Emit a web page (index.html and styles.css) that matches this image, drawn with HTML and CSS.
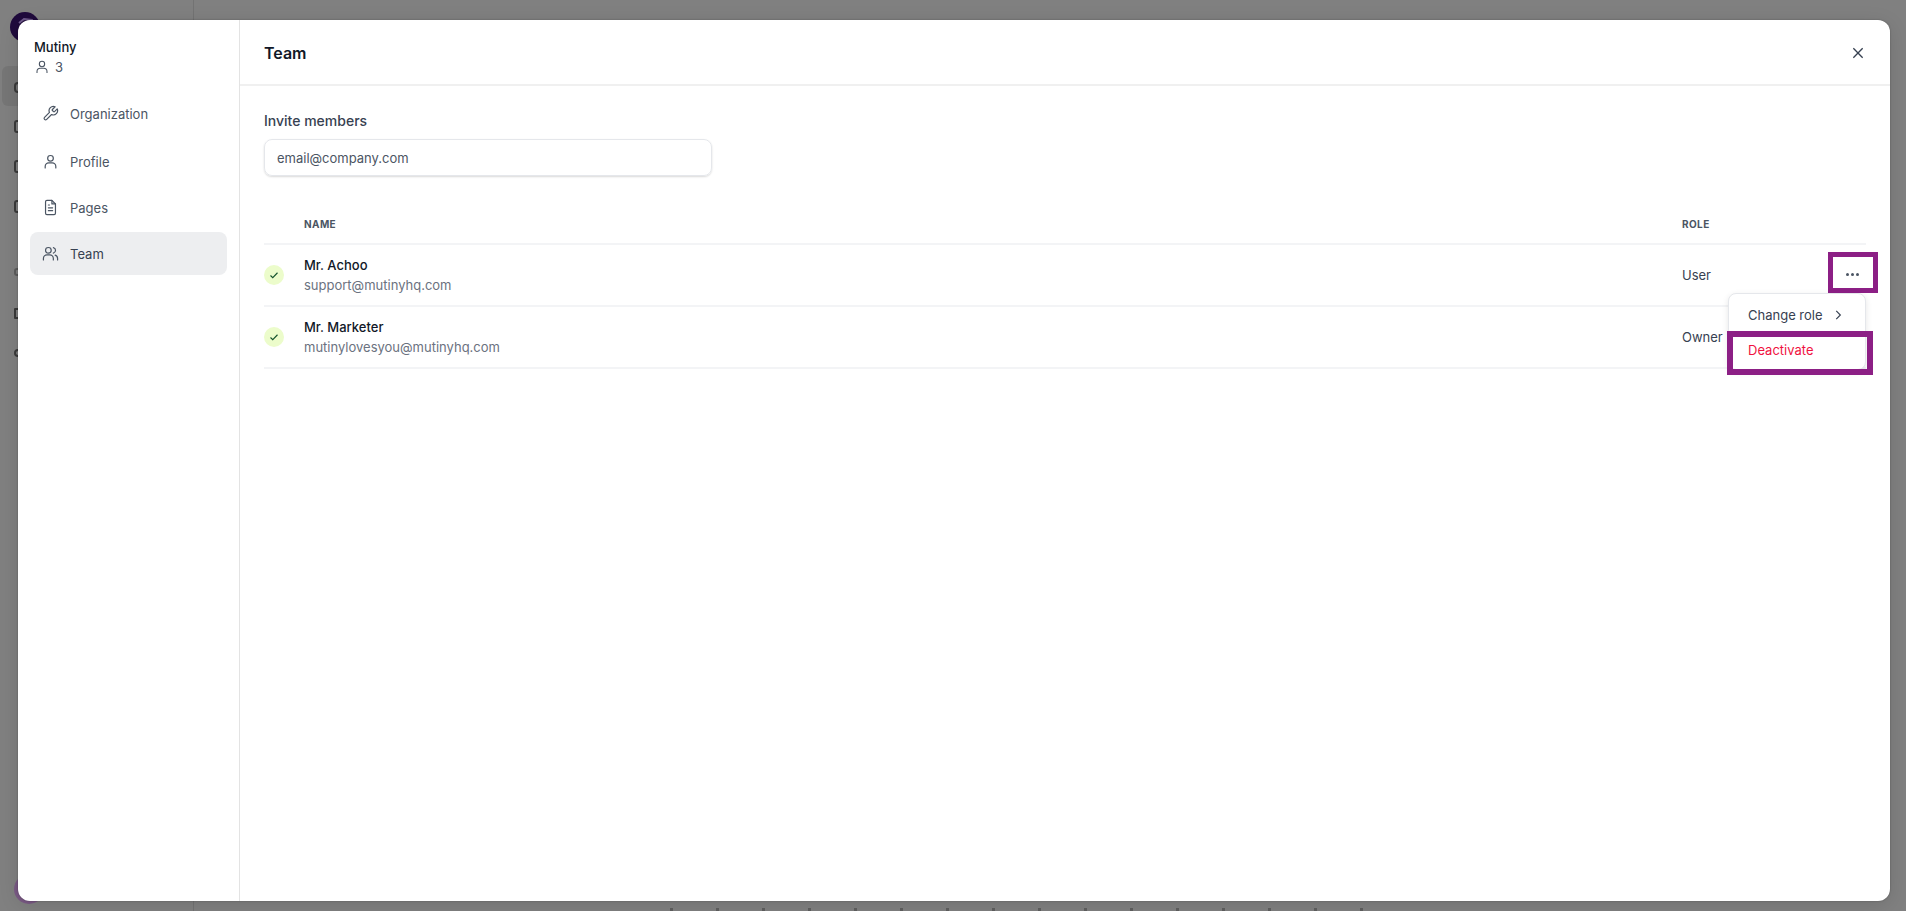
FILE: index.html
```html
<!DOCTYPE html>
<html lang="en">
<head>
    <meta charset="UTF-8">
    <title>Team</title>
    <link rel="stylesheet" href="styles.css">
</head>
<body>
    <!-- app behind the overlay -->
    <div class="behind">
        <div class="behind-nav">
            <div class="logo">
                <svg viewBox="0 0 30 30"><path d="M9 11l5-4 8 1 3 6-3 7-7 3"/></svg>
            </div>
            <div class="behind-active"></div>
            <div class="behind-icons">
                <span class="stub s1"></span>
                <span class="stub s2"></span>
                <span class="stub s3"></span>
                <span class="stub s3"></span>
                <span class="stub s4"></span>
                <span class="stub s5"></span>
                <span class="stub s6"></span>
            </div>
            <div class="avatar"></div>
        </div>
        <div class="behind-text"></div>
    </div>

    <div class="modal">
        <aside class="side">
            <div class="org">
                <div class="org-name">Mutiny</div>
                <div class="org-count">
                    <svg class="ico-sm" viewBox="0 0 24 24"><circle cx="12" cy="7.5" r="4"/><path d="M4.5 21v-2a5 5 0 0 1 5-5h5a5 5 0 0 1 5 5v2"/></svg>
                    <span>3</span>
                </div>
            </div>
            <nav class="nav">
                <a class="nav-item first">
                    <svg class="ico" viewBox="0 0 24 24"><path d="M14.7 6.3a1 1 0 0 0 0 1.4l1.6 1.6a1 1 0 0 0 1.4 0l3.77-3.77a6 6 0 0 1-7.94 7.94l-6.91 6.91a2.12 2.12 0 0 1-3-3l6.91-6.91a6 6 0 0 1 7.94-7.94l-3.76 3.76z"/></svg>
                    Organization
                </a>
                <a class="nav-item">
                    <svg class="ico" viewBox="0 0 24 24"><circle cx="12" cy="7.5" r="4"/><path d="M4.5 21v-2a5 5 0 0 1 5-5h5a5 5 0 0 1 5 5v2"/></svg>
                    Profile
                </a>
                <a class="nav-item">
                    <svg class="ico" viewBox="0 0 24 24"><path d="M14 2H7a2 2 0 0 0-2 2v16a2 2 0 0 0 2 2h10a2 2 0 0 0 2-2V7z"/><path d="M14 2v5h5M9 12.5h6M9 16.5h6M9 8.5h1.5"/></svg>
                    Pages
                </a>
                <a class="nav-item active">
                    <svg class="ico" viewBox="0 0 24 24"><circle cx="9" cy="7.5" r="4"/><path d="M2 21v-2a5 5 0 0 1 5-5h4a5 5 0 0 1 5 5v2M16 3.6a4 4 0 0 1 0 7.8M22 21v-2a5 5 0 0 0-3.5-4.8"/></svg>
                    Team
                </a>
            </nav>
        </aside>

        <main class="main">
            <header class="head">
                <h1>Team</h1>
                <svg class="close" viewBox="0 0 24 24"><path d="M5 5l14 14M19 5L5 19"/></svg>
            </header>
            <div class="content">
                <label class="invite-label">Invite members</label>
                <div class="invite-input">email@company.com</div>

                <div class="table">
                    <div class="row row-head">
                        <div class="c-status"></div>
                        <div class="c-name">NAME</div>
                        <div class="c-role">ROLE</div>
                    </div>
                    <div class="row">
                        <div class="c-status"><span class="tick"><svg viewBox="0 0 24 24"><path d="M5 13l4.5 4.5L19 7.5"/></svg></span></div>
                        <div class="c-name">
                            <div class="person">Mr. Achoo</div>
                            <div class="mail">support@mutinyhq.com</div>
                        </div>
                        <div class="c-role">User</div>
                    </div>
                    <div class="row">
                        <div class="c-status"><span class="tick"><svg viewBox="0 0 24 24"><path d="M5 13l4.5 4.5L19 7.5"/></svg></span></div>
                        <div class="c-name">
                            <div class="person">Mr. Marketer</div>
                            <div class="mail">mutinylovesyou@mutinyhq.com</div>
                        </div>
                        <div class="c-role">Owner</div>
                    </div>
                </div>

                <!-- dropdown open on first row -->
                <div class="dots"><i></i><i></i><i></i></div>
                <div class="menu">
                    <div class="menu-item">Change role
                        <svg class="chev" viewBox="0 0 24 24"><path d="M9 5l7 7-7 7"/></svg>
                    </div>
                    <div class="menu-item danger">Deactivate</div>
                </div>
            </div>
        </main>
    </div>
</body>
</html>
```

FILE: styles.css
```css
html, body{
    margin: 0;
    height: 100%;
}
body{
    width: 1906px;
    height: 911px;
    overflow: hidden;
    position: relative;
    background-color: #808080;
    font-family: "Inter", "Liberation Sans", sans-serif;
    color: #111827;
}
.behind{
    height: 100%;
}
.behind-nav{
    width: 193px;
    height: 100%;
    border-right: 1px solid #737373;
    position: relative;
}
.logo{
    position: absolute;
    left: 10px;
    top: 12px;
    width: 30px;
    height: 30px;
    border-radius: 50%;
    background-color: #1f0a3c;
}
.logo svg{
    display: block;
    fill: none;
    stroke: #6f5a8c;
    stroke-width: 2;
}
.avatar{
    position: absolute;
    left: 14px;
    top: 874px;
    width: 30px;
    height: 30px;
    border-radius: 50%;
    background-color: #7a5a85;
}
.behind-active{
    position: absolute;
    left: 2px;
    top: 66px;
    width: 30px;
    height: 40px;
    border-radius: 6px;
    background-color: #767676;
}
.behind-icons{
    position: absolute;
    left: 14px;
    top: 0;
    display: flex;
    flex-direction: column;
}
.stub{
    display: block;
    width: 8px;
    box-sizing: border-box;
    border: 2px solid #3a3a3a;
    border-radius: 3px;
}
.s1{
    height: 11px;
    margin-top: 82px;
    border-radius: 5px;
}
.s2{
    height: 13px;
    margin-top: 27px;
}
.s3{
    height: 13px;
    margin-top: 27px;
}
.s4{
    height: 8px;
    margin-top: 55px;
    border-color: #5c5c5c;
}
.s5{
    height: 11px;
    margin-top: 32px;
    border-radius: 1px;
}
.s6{
    height: 8px;
    margin-top: 30px;
    border-radius: 4px;
}
.behind-text{
    position: absolute;
    left: 670px;
    bottom: 0;
    width: 700px;
    height: 3px;
    background-image: repeating-linear-gradient(90deg, #5f5f5f 0 3px, transparent 3px 46px);
}

.modal{
    position: absolute;
    left: 18px;
    top: 20px;
    width: 1872px;
    height: 881px;
    background-color: white;
    border-radius: 12px;
    overflow: hidden;
    display: flex;
    box-shadow: 0 4px 20px rgba(0,0,0,0.12), 0 0 2px rgba(0,0,0,0.3);
}
.side{
    flex: none;
    width: 197px;
    border-right: 1px solid #e3e3e3;
    padding: 17px 12px 0;
}
.org{
    padding-left: 4px;
}
.org-name{
    font-size: 13px;
    line-height: 20px;
    font-weight: 500;
}
.org-count{
    display: flex;
    align-items: center;
    gap: 5px;
    font-size: 13px;
    line-height: 20px;
    color: #4b5563;
}
.ico-sm{
    width: 16px;
    height: 16px;
    fill: none;
    stroke: #4b5563;
    stroke-width: 1.6;
}
.nav{
    margin-top: 15px;
    display: flex;
    flex-direction: column;
    gap: 3px;
}
.nav-item{
    display: flex;
    align-items: center;
    gap: 11px;
    height: 43px;
    padding-left: 12px;
    border-radius: 8px;
    font-size: 13px;
    color: #4b5563;
}
.nav-item.first{
    margin-bottom: 2px;
}
.nav-item.active{
    background-color: #edeef0;
    color: #374151;
}
.ico{
    width: 17px;
    height: 17px;
    flex: none;
    fill: none;
    stroke: #4b5563;
    stroke-width: 1.7;
    stroke-linecap: round;
    stroke-linejoin: round;
}

.main{
    flex: 1;
    display: flex;
    flex-direction: column;
    min-width: 0;
}
.head{
    height: 66px;
    box-sizing: border-box;
    flex: none;
    border-bottom: 2px solid #f0f0f0;
    display: flex;
    align-items: center;
    justify-content: space-between;
    padding: 2px 24px 0;
}
.head h1{
    margin: 0;
    font-size: 16px;
    font-weight: 600;
}
.close{
    width: 16px;
    height: 16px;
    fill: none;
    stroke: #374151;
    stroke-width: 2;
}
.content{
    position: relative;
    flex: 1;
    padding: 25px 24px 0;
}
.invite-label{
    display: block;
    font-size: 14px;
    line-height: 20px;
    font-weight: 500;
    color: #374151;
}
.invite-input{
    width: 448px;
    height: 37px;
    margin-top: 8px;
    box-sizing: border-box;
    padding: 0 12px;
    line-height: 36px;
    font-size: 13px;
    color: #4b5563;
    border: 1px solid #e5e7eb;
    border-radius: 8px;
    box-shadow: 0 1px 2px rgba(0,0,0,0.15);
}
.table{
    margin-top: 28px;
}
.row{
    display: flex;
    align-items: center;
    height: 60px;
    border-bottom: 2px solid #f3f4f6;
}
.row-head{
    height: 39px;
    font-size: 10px;
    font-weight: 700;
    letter-spacing: 0.4px;
    color: #4b5563;
}
.c-status{
    width: 40px;
    flex: none;
}
.c-name{
    flex: 1;
    min-width: 0;
}
.c-role{
    width: 184px;
    flex: none;
    font-size: 13px;
    color: #374151;
}
.row-head .c-role{
    font-size: 10px;
    color: #4b5563;
}
.tick{
    display: flex;
    align-items: center;
    justify-content: center;
    width: 20px;
    height: 20px;
    border-radius: 50%;
    background-color: #ecfccb;
}
.tick svg{
    width: 12px;
    height: 12px;
    fill: none;
    stroke: #14532d;
    stroke-width: 2.2;
}
.person{
    font-size: 13px;
    line-height: 20px;
    font-weight: 500;
}
.mail{
    font-size: 13px;
    line-height: 20px;
    color: #6b7280;
}

/* highlighted button + dropdown lie over the table */
.dots{
    position: absolute;
    left: 1593px;
    top: 171px;
    width: 40px;
    height: 31px;
    box-sizing: border-box;
    padding: 3px 1px 0 0;
    display: flex;
    align-items: center;
    justify-content: center;
    gap: 2px;
    outline: 5px solid #8c1f85;
    background-color: white;
}
.dots i{
    width: 3px;
    height: 3px;
    border-radius: 50%;
    background-color: #4b5563;
}
.menu{
    position: absolute;
    left: 1488px;
    top: 207px;
    width: 138px;
    height: 77px;
    box-sizing: border-box;
    background-color: white;
    border: 1px solid #e5e7eb;
    border-radius: 8px;
    box-shadow: 0 2px 6px rgba(0,0,0,0.1);
}
.menu-item{
    display: flex;
    align-items: center;
    height: 42px;
    padding-left: 19px;
    font-size: 13px;
    color: #374151;
}
.chev{
    width: 14px;
    height: 14px;
    margin-left: 8px;
    fill: none;
    stroke: #374151;
    stroke-width: 2;
}
.menu-item.danger{
    color: #f0123f;
    width: 134px;
    height: 32px;
    padding: 0 0 6px 15px;
    margin: 1px 0 0 4px;
    box-sizing: border-box;
    outline: 6px solid #8c1f85;
}
```
